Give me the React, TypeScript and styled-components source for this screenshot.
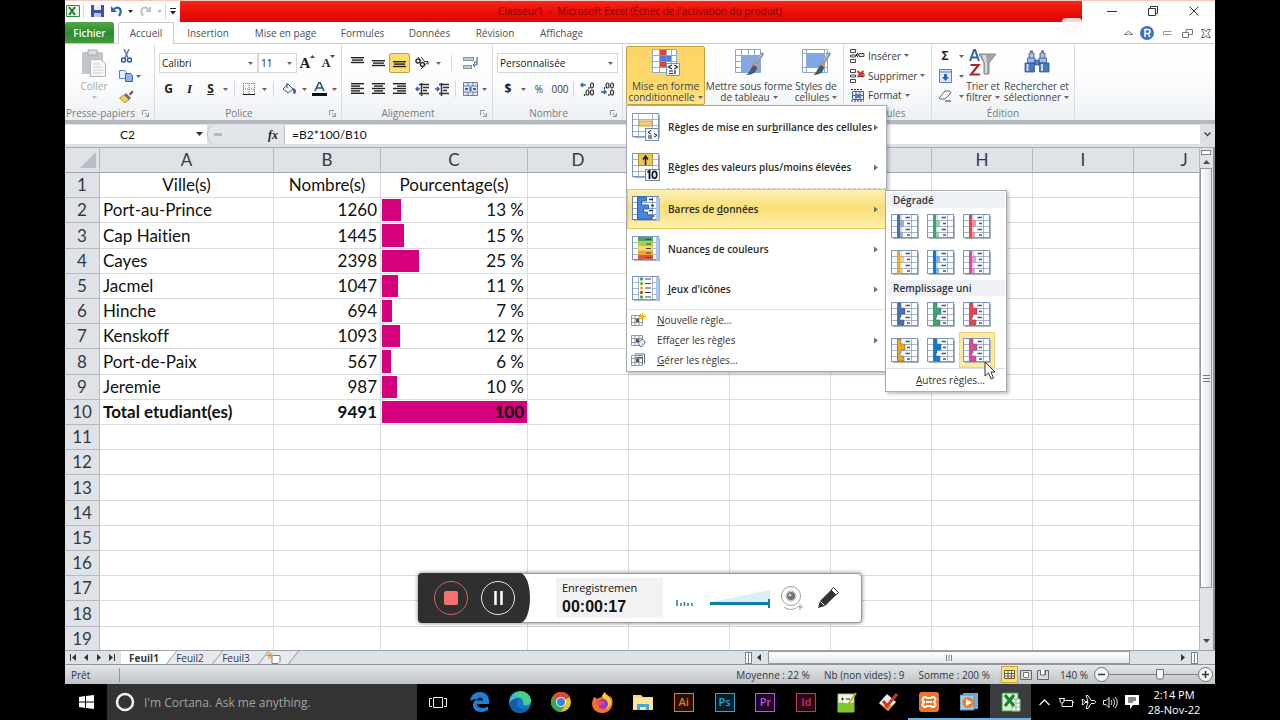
import React from "react";
import styled, { createGlobalStyle, css } from "styled-components";

const UI = `"Open Sans", "Noto Sans", sans-serif`;
const CELL = `Lato, "Liberation Sans", sans-serif`;

const Global = createGlobalStyle`
  * { box-sizing: border-box; }
  body { margin: 0; background: #000; font-family: ${UI}; font-size: 10px; color: #3b3b3b; }
  button, input, select { font: inherit; color: inherit; margin: 0; padding: 0; border: 0; background: none; border-radius: 0; }
  svg { display: block; flex: none; }
`;

/* ---------- shell ---------- */
const Desktop = styled.div`
  display: flex;
  flex-direction: column;
  min-height: 100vh;
  padding: 0 65px;
  background: #000;
`;
const Workbook = styled.main`
  display: flex;
  flex-direction: column;
  flex: 1;
  position: relative;
  background: #fff;
`;

/* ---------- title bar ---------- */
const TitleBar = styled.header`
  display: grid;
  grid-template-columns: 115px 1fr 133px;
  height: 22px;
  border-top: 1px solid #f6c9be;
  position: relative;
`;
const Watermark = styled.span`
  position: absolute;
  right: 133px;
  top: 17px;
  width: 20px;
  height: 18px;
  border-radius: 4px;
  background: rgba(255, 250, 250, 0.85);
`;
const QuickAccess = styled.div`
  display: flex;
  align-items: center;
  height: 20px;
`;
const Tool = styled.button<{ $w?: number; $on?: boolean }>`
  display: flex;
  align-items: center;
  justify-content: center;
  flex: none;
  width: ${(p) => p.$w ?? 21}px;
  height: 20px;
  ${(p) =>
    p.$on &&
    css`
      border: 1px solid #c9a13b;
      border-radius: 2px;
      background: linear-gradient(#fbdd7c, #fdd666 60%, #fde57c);
    `}
`;
const Title = styled.h1`
  margin: 0;
  height: 21px;
  padding-left: 18px;
  background: linear-gradient(#f5281c, #ee120b 40%, #df0402);
  color: #7d0806;
  font-size: 10px;
  line-height: 21px;
  font-weight: 400;
  text-align: center;
  white-space: pre;
`;
const WindowButtons = styled.div`
  display: flex;
  justify-content: flex-end;
  padding-right: 1px;
`;

/* ---------- tabs ---------- */
const Tabs = styled.nav`
  display: flex;
  align-items: flex-end;
  height: 22px;
  border-bottom: 1px solid #c5cad0;
  color: #4b4f54;
`;
const FileTab = styled.button`
  width: 49px;
  height: 21px;
  margin-right: 4px;
  border-radius: 2px 2px 0 0;
  background: linear-gradient(#52a647, #2c8a2c 55%, #3f9c38);
  color: #fff;
  font-size: 10px;
  font-weight: 600;
`;
const Tab = styled.button<{ $active?: boolean; $w: number }>`
  width: ${(p) => p.$w}px;
  height: 21px;
  white-space: nowrap;
  ${(p) =>
    p.$active &&
    css`
      height: 22px;
      margin-bottom: -1px;
      border: 1px solid #c5cad0;
      border-bottom-color: #fff;
      border-radius: 2px 2px 0 0;
      background: #fff;
    `}
`;
const TabTools = styled.div`
  display: flex;
  margin-left: auto;
`;

/* ---------- ribbon ---------- */
const RibbonBar = styled.section`
  display: flex;
  height: 80px;
  border-bottom: 4px solid #b3b9c0;
  background: linear-gradient(#fff, #fbfcfd 50%, #edf0f3);
`;
const Group = styled.div<{ $w: number }>`
  display: flex;
  flex-direction: column;
  flex: none;
  width: ${(p) => p.$w}px;
  border-right: 1px solid #d9dde1;
`;
const GroupBody = styled.div`
  display: flex;
  height: 61px;
  padding-top: 2px;
`;
const GroupLabel = styled.div<{ $launcher?: boolean }>`
  display: flex;
  align-items: center;
  justify-content: center;
  position: relative;
  height: 15px;
  padding-right: ${(p) => (p.$launcher ? 18 : 0)}px;
  color: #777b80;
  white-space: nowrap;
  svg { position: absolute; right: 5px; top: 5px; }
`;
const Stack = styled.div<{ $gap?: number; $top?: number }>`
  display: flex;
  flex-direction: column;
  gap: ${(p) => p.$gap ?? 0}px;
  padding-top: ${(p) => p.$top ?? 0}px;
`;
const Row = styled.div`
  display: flex;
  align-items: center;
  height: 20px;
`;
const Divider = styled.span<{ $m?: number }>`
  width: 1px;
  height: 16px;
  margin: 0 ${(p) => p.$m ?? 4}px;
  background: #d5d9dd;
`;
const Gap = styled.span<{ $w: number }>`
  flex: none;
  width: ${(p) => p.$w}px;
`;
const Combo = styled.label<{ $w: number }>`
  display: block;
  position: relative;
  width: ${(p) => p.$w}px;
  height: 20px;
  border: 1px solid #d3d6da;
  background: #fff;
  select {
    width: 100%;
    height: 18px;
    padding: 0 2px;
    appearance: none;
    color: #222;
  }
  svg { position: absolute; right: 4px; top: 8px; pointer-events: none; }
`;
const BigButton = styled.button<{ $w: number; $on?: boolean; $dim?: boolean }>`
  display: flex;
  flex-direction: column;
  align-items: center;
  flex: none;
  width: ${(p) => p.$w}px;
  height: 59px;
  padding: 3px 0 2px;
  line-height: 11px;
  white-space: nowrap;
  color: ${(p) => (p.$dim ? "#a5a8ab" : "#3f4246")};
  > svg { margin-bottom: auto; }
  ${(p) =>
    p.$on &&
    css`
      border: 1px solid #c8a23e;
      border-radius: 2px;
      background: linear-gradient(#fcd468, #fdd869 60%, #fee38a);
      padding: 2px 0 1px;
    `}
`;
const Line = styled.span`
  display: flex;
  align-items: center;
  gap: 3px;
  height: 11px;
`;
const TextTool = styled.button`
  display: flex;
  align-items: center;
  gap: 3px;
  height: 20px;
  padding-left: 6px;
  white-space: nowrap;
`;
const Anchor = styled.div`
  position: relative;
`;
const Glyph = styled.span<{ $serif?: boolean; $size?: number; $italic?: boolean; $line?: boolean }>`
  font-family: ${(p) => (p.$serif ? `"Liberation Serif", serif` : UI)};
  font-size: ${(p) => p.$size ?? 12}px;
  font-weight: 700;
  font-style: ${(p) => (p.$italic ? "italic" : "normal")};
  text-decoration: ${(p) => (p.$line ? "underline" : "none")};
  color: #222;
  line-height: 16px;
`;
const SizeTool = styled(Tool)`
  align-items: flex-start;
  padding-top: 2px;
`;

/* ---------- menus ---------- */
const Menu = styled.div`
  position: absolute;
  z-index: 5;
  top: 59px;
  left: 0;
  width: 261px;
  padding: 1px 0;
  border: 1px solid #a7abb0;
  background: #fff;
  box-shadow: 2px 2px 3px rgba(0, 0, 0, 0.25);
`;
const MenuItem = styled.button<{ $on?: boolean }>`
  display: flex;
  align-items: center;
  width: 100%;
  height: 40px;
  padding: 0 8px 0 5px;
  color: #2b2b2b;
  font-weight: 600;
  white-space: nowrap;
  span { flex: 1; margin-left: 8px; text-align: left; }
  ${(p) =>
    p.$on &&
    css`
      border: 1px solid #e8c95c;
      padding: 0 7px 0 4px;
      background: linear-gradient(#fdf0b4, #fbdf78 45%, #fae182 60%, #fdf3ac);
    `}
`;
const SmallItem = styled.button`
  display: flex;
  align-items: center;
  width: 100%;
  height: 20px;
  padding: 0 8px 0 4px;
  color: #333;
  white-space: nowrap;
  span { flex: 1; margin-left: 11px; text-align: left; }
`;
const MenuRule = styled.hr<{ $dashed?: boolean }>`
  height: 1px;
  margin: ${(p) => (p.$dashed ? "1px 0 0 40px" : "0")};
  border: 0;
  border-top: 1px ${(p) => (p.$dashed ? "dashed #c4c8cc" : "solid #dcdfe3")};
`;
const SubMenu = styled.div`
  position: absolute;
  z-index: 6;
  top: 84px;
  left: 258px;
  width: 122px;
  padding: 1px;
  border: 1px solid #a7abb0;
  background: #fff;
  box-shadow: 2px 2px 3px rgba(0, 0, 0, 0.25);
`;
const SubTitle = styled.h2`
  margin: 0;
  height: 16px;
  padding-left: 6px;
  background: #eef1f5;
  font-size: 10px;
  line-height: 16px;
  font-weight: 600;
  color: #2f343a;
`;
const Swatches = styled.div`
  display: grid;
  grid-template-columns: repeat(3, 36px);
  grid-auto-rows: 36px;
`;
const Swatch = styled.button<{ $on?: boolean }>`
  display: grid;
  place-items: center;
  border: 1px solid ${(p) => (p.$on ? "#efd67c" : "transparent")};
  background: ${(p) => (p.$on ? "#fbeaa0" : "none")};
`;
const MoreRules = styled.button`
  display: block;
  width: 100%;
  height: 22px;
  padding-left: 9px;
  border-top: 1px solid #dcdfe3;
  color: #333;
`;
const Pointer = styled.div`
  position: absolute;
  right: 10px;
  bottom: 11px;
`;

/* ---------- formula bar ---------- */
const FormulaBar = styled.div`
  display: grid;
  grid-template-columns: 142px 78px 1fr 15px;
  align-items: center;
  height: 24px;
  padding: 1px 0 3px;
  border-bottom: 1px solid #a9aeb4;
  background: #dde1e6;
  color: #111;
  > * { height: 19px; }
`;
const NameBox = styled.label`
  display: flex;
  align-items: center;
  background: #fff;
  input { width: 125px; text-align: center; font-family: ${CELL}; font-size: 12px; }
`;
const FxCell = styled.div`
  display: flex;
  align-items: center;
  justify-content: space-between;
  padding: 0 6px 0 4px;
  border: 1px solid #b9bec4;
  border-width: 0 1px 0 1px;
  border-radius: 9px 0 0 9px;
  background: #e3e6ea;
`;
const Formula = styled.input`
  && {
    min-width: 0;
    padding-left: 7px;
    background: #fff;
    font-family: ${CELL};
    font-size: 12px;
  }
`;

/* ---------- sheet ---------- */
const SheetRow = styled.div`
  display: flex;
  flex: 1 0 502px;
`;
const SheetView = styled.div`
  flex: 1;
  min-width: 0;
  height: 502px;
  overflow: hidden;
`;
const Sheet = styled.table`
  width: calc(100% + 36px);
  height: 504px;
  table-layout: fixed;
  border-collapse: separate;
  border-spacing: 0;
  font-family: ${CELL};
  font-size: 17px;
  font-variant-ligatures: none;
  line-height: 20px;
  color: #111;
  tr { height: 25px; }
  th, td { padding: 0 3px 0 3px; border-right: 1px solid #dadcdf; border-bottom: 1px solid #dadcdf; white-space: nowrap; }
  th { border-color: #b4b9bf; background: #dfe3e8; font-weight: 400; color: #333a42; }
  thead th { border-bottom-color: #9fa5ac; }
`;
const Corner = styled.span`
  display: block;
  width: 0;
  margin-left: auto;
  border-left: 16px solid transparent;
  border-bottom: 16px solid #b9bec5;
`;
const Cell = styled.td<{ $align?: string; $bold?: boolean }>`
  position: relative;
  text-align: ${(p) => p.$align ?? "left"};
  font-weight: ${(p) => (p.$bold ? 700 : 400)};
  span { position: relative; }
`;
const DataBar = styled.i`
  position: absolute;
  left: 1px;
  top: 1px;
  bottom: 1px;
  background: #d4007c;
`;
const VScroll = styled.div`
  display: flex;
  flex-direction: column;
  align-items: center;
  width: 16px;
  padding: 1px 2px 2px 1px;
  border-left: 1px solid #b4b9bf;
  border-right: 2px solid #8e9398;
  background: #dfe3e7;
`;
const VHandle = styled.span`
  width: 10px;
  height: 5px;
  margin: 1px 0 5px;
  border: 1px solid #7d838a;
  background: #fff;
`;
const VThumb = styled.div`
  display: grid;
  place-items: center;
  width: 12px;
  height: 420px;
  margin: 4px 0 auto;
  border: 1px solid #9299a1;
  background: linear-gradient(90deg, #fff, #dfe3e8);
`;

/* ---------- sheet tabs ---------- */
const BottomBar = styled.div`
  display: flex;
  height: 14px;
  border-top: 1px solid #9da3aa;
  background: #dde2e6;
`;
const NavButtons = styled.div`
  display: flex;
  width: 56px;
  padding-left: 1px;
  button { width: 13px; height: 13px; display: grid; place-items: center; }
`;
const SheetTab = styled.button<{ $active?: boolean; $w: number }>`
  position: relative;
  width: ${(p) => p.$w}px;
  height: 13px;
  line-height: 12px;
  font-weight: ${(p) => (p.$active ? 700 : 400)};
  color: #333a42;
  background: ${(p) => (p.$active ? "#fff" : "#e6eaed")};
  &::after {
    content: "";
    position: absolute;
    z-index: 1;
    top: 0;
    right: -5px;
    width: 8px;
    height: 13px;
    border-right: 1px solid #8e959c;
    background: inherit;
    transform: skewX(-38deg);
  }
  span { position: relative; z-index: 2; }
`;
const HScroll = styled.div`
  display: flex;
  align-items: center;
  gap: 2px;
  width: 470px;
  margin-left: auto;
  padding-right: 17px;
`;
const SplitHandle = styled.span`
  width: 7px;
  height: 12px;
  border: 1px solid #7d838a;
  background: linear-gradient(90deg, #fff 2px, #7d838a 2px, #7d838a 3px, #fff 3px);
`;
const HThumb = styled.div`
  display: grid;
  place-items: center;
  width: 362px;
  height: 13px;
  margin-right: auto;
  border: 1px solid #9299a1;
  background: linear-gradient(#fff, #e2e6ea);
`;

/* ---------- status bar ---------- */
const StatusBar = styled.footer`
  display: flex;
  align-items: center;
  height: 20px;
  padding: 0 2px 0 6px;
  border-top: 1px solid #8f959b;
  background: linear-gradient(#e4e7e9, #cdd1d4 60%, #bfc4c7);
  color: #34383c;
  white-space: nowrap;
`;
const Ready = styled.span`
  width: 49px;
  border-right: 1px solid #8f959b;
`;
const Stats = styled.div`
  display: flex;
  gap: 14px;
  margin-left: auto;
`;
const ViewButton = styled.button<{ $on?: boolean }>`
  display: grid;
  place-items: center;
  width: 17px;
  height: 17px;
  border: 1px solid ${(p) => (p.$on ? "#d2a52f" : "transparent")};
  background: ${(p) => (p.$on ? "#fbe07a" : "none")};
`;
const Round = styled.button`
  && {
    display: grid;
    place-items: center;
    width: 15px;
    height: 15px;
    border: 1px solid #6c7278;
    border-radius: 50%;
    background: #f3f5f6;
  }
`;
const Zoom = styled.input`
  && {
    width: 89px;
    height: 14px;
    appearance: none;
    background: linear-gradient(#7b8086, #7b8086) center / 100% 1px no-repeat;
  }
  &::-webkit-slider-thumb {
    appearance: none;
    width: 8px;
    height: 11px;
    border: 1px solid #6c7278;
    border-radius: 1px 1px 4px 4px;
    background: #f3f5f6;
  }
`;

/* ---------- recorder ---------- */
const Recorder = styled.aside`
  position: absolute;
  z-index: 7;
  left: 50%;
  bottom: 61px;
  display: flex;
  align-items: center;
  width: 444px;
  height: 50px;
  margin-left: -222px;
  border: 1px solid #9a9a9a;
  border-radius: 4px;
  background: #fff;
  box-shadow: 0 0 4px rgba(0, 0, 0, 0.5);
`;
const RecControls = styled.div`
  display: flex;
  align-items: center;
  gap: 13px;
  width: 112px;
  height: 50px;
  margin-left: -1px;
  padding-left: 16px;
  border-radius: 4px 10px 10px 4px / 4px 25px 25px 4px;
  background: #2f2f2f;
`;
const RecButton = styled.button<{ $c: string }>`
  && {
    display: grid;
    place-items: center;
    width: 34px;
    height: 34px;
    border: 1px solid ${(p) => p.$c};
    border-radius: 50%;
  }
`;
const RecTime = styled.div`
  width: 107px;
  height: 40px;
  margin-left: 26px;
  padding: 1px 6px 0;
  background: #f2f2f2;
  color: #111;
  font-size: 11px;
  line-height: 17px;
  strong { display: block; font: 700 16px/22px "Liberation Sans", sans-serif; }
`;
const Volume = styled.input`
  && {
    width: 60px;
    height: 16px;
    margin: 0 10px 0 17px;
    appearance: none;
    background: linear-gradient(#127ea3, #127ea3) 0 12px / 100% 3px no-repeat,
      linear-gradient(to bottom right, transparent 50%, #d9f0f8 50%) 0 0 / 100% 12px no-repeat;
  }
  &::-webkit-slider-thumb { appearance: none; width: 2px; height: 9px; margin-top: 10px; background: #127ea3; }
`;

/* ---------- taskbar ---------- */
const Taskbar = styled.footer`
  display: flex;
  height: 36px;
  background: #000;
  color: #fff;
`;
const Start = styled.button`
  display: grid;
  place-items: center;
  width: 42px;
`;
const Cortana = styled.label`
  display: flex;
  align-items: center;
  gap: 9px;
  width: 310px;
  padding-left: 8px;
  background: #333;
  input { flex: 1; min-width: 0; font-size: 12px; }
  input::placeholder { color: #a3a3a3; opacity: 1; }
`;
const Apps = styled.div`
  display: flex;
  flex: 1;
`;
const TaskApp = styled.button<{ $open?: boolean; $active?: boolean }>`
  display: grid;
  place-items: center;
  flex: 1;
  background: ${(p) => (p.$active ? "#3a3d3f" : "none")};
  box-shadow: ${(p) => (p.$open || p.$active ? "inset 0 -2px 0 #6fb0e6" : "none")};
`;
const AdobeMark = styled.span<{ $c: string; $bg: string }>`
  display: grid;
  place-items: center;
  width: 20px;
  height: 19px;
  border: 1px solid ${(p) => p.$c};
  background: ${(p) => p.$bg};
  color: ${(p) => p.$c};
  font: 600 11px/12px "Open Sans", sans-serif;
`;
const Tray = styled.div`
  display: flex;
  align-items: center;
  width: 184px;
  padding: 0 10px 0 2px;
`;
const TrayButton = styled.button`
  display: grid;
  place-items: center;
  width: 22px;
  height: 30px;
`;
const Clock = styled.time`
  flex: 1;
  text-align: center;
  font-size: 11px;
  line-height: 15px;
  white-space: nowrap;
`;

/* ---------- icons ---------- */
type SvgProps = { w: number; h: number; children: React.ReactNode };
const Svg = ({ w, h, children }: SvgProps) => (
  <svg width={w} height={h} viewBox={`0 0 ${w} ${h}`} fill="none" aria-hidden="true">
    {children}
  </svg>
);
const Caret = ({ c = "#666" }: { c?: string }) => (
  <Svg w={5} h={3}><path d="M0 0h5L2.500 3z" fill={c} /></Svg>
);
const UpCaret = () => (
  <Svg w={5} h={3}><path d="M0 3h5L2.500 0z" fill="#35507f" /></Svg>
);
const RightCaret = () => (
  <Svg w={4} h={7}><path d="M0 .5 4 3.500 0 6.500z" fill="#6c7075" /></Svg>
);
const Launcher = () => (
  <Svg w={7} h={7}><path d="M.5 5V.5H5M3 3l3 3M6.500 3v3.500H3" stroke="#8f959c" /></Svg>
);
const Lines = ({ rows, y = 0 }: { rows: [number, number][]; y?: number }) => (
  <Svg w={13} h={12}>
    {rows.map(([x, w], i) => (
      <rect key={i} x={x} y={y + i * 2.400} width={w} height={1.400} fill="#222" />
    ))}
  </Svg>
);
const Indent = ({ flip }: { flip?: boolean }) => (
  <Svg w={15} h={13}>
    <path d="M4 1.500h10M8 4.500h6M8 7.500h4M4 10.500h10M6.500 0v13" stroke="#333" strokeWidth="1.500" />
    <path d={flip ? "M0 6h4M2 4l2 2-2 2" : "M5 6H1M3 4 1 6l2 2"} stroke="#2f64b5" strokeWidth="1.500" />
  </Svg>
);
const Decimals = ({ up }: { up?: boolean }) => (
  <Svg w={15} h={14}>
    <path d={up ? "M6 3H1M3 1 1 3l2 2" : "M1 10h5M4 8l2 2-2 2"} stroke="#2f64b5" strokeWidth="1.500" />
    <g stroke="#333" strokeWidth="1.200">
      <ellipse cx="12" cy="3.500" rx="1.500" ry="2.500" />
      <ellipse cx="12" cy="10.500" rx="1.500" ry="2.500" />
      {up ? <ellipse cx="7.500" cy="10.500" rx="1.500" ry="2.500" /> : <ellipse cx="7.500" cy="3.500" rx="1.500" ry="2.500" />}
      <path d={up ? "M9 5v2M4.500 12v2" : "M4.500 5v2M9 12v2"} />
    </g>
  </Svg>
);

const GridBase = ({ line = "#7d97bd" }: { line?: string }) => (
  <>
    <path d="M2 24.500h25.500V2" stroke="#aab2bd" />
    <rect x=".5" y=".5" width="26" height="23" fill="#fdfeff" stroke={line} />
    <path d="M.5 6.500h26M.5 12.500h26M.5 18.500h26M6.500 0v24M20.500 0v24" stroke={line} strokeOpacity=".7" />
  </>
);
const BarsIcon = ({ c, solid }: { c: string; solid?: boolean }) => (
  <Svg w={28} h={25}>
    <GridBase />
    {solid ? (
      <path d="M6.500 1h3.500v5h4v6h-4v3h-1v3h4v5H6.500z" fill={c} stroke="#4b5a75" strokeOpacity=".5" />
    ) : (
      <>
        <path d="M6 1h3v23H6z" fill={c} />
        <path d="M9 6.500h4v6H9zM9 18.500h3v5H9z" fill={c} fillOpacity=".55" />
        <path d="M9 1h2v5H9zM9 13h2v5H9z" fill={c} fillOpacity=".25" />
      </>
    )}
    <path d="M14.500 3.500h4.500M16 9.500h3M14.500 15.500h4.500M16 21h3" stroke="#555" strokeWidth="1.500" />
  </Svg>
);
const HighlightIcon = () => (
  <Svg w={28} h={28}>
    <GridBase />
    <rect x="7" y="8" width="13" height="5" fill="#f4cf6c" stroke="#c9a245" />
    <rect x="13.500" y="15.500" width="13" height="12" fill="#f1f5fb" stroke="#7189ab" />
    <path d="m19 17.500-3 1.800 3 1.800M16 23h4M16 25h4M22 20.500l3 1.800-3 1.800" stroke="#222" />
  </Svg>
);
const TopIcon = () => (
  <Svg w={28} h={28}>
    <GridBase />
    <path d="M6.500 .5h14v12h-14z" fill="#e9c659" stroke="#b78d2c" />
    <path d="M13.500 12V4M11 6.500 13.500 3 16 6.500" stroke="#222" strokeWidth="1.500" />
    <rect x="13.500" y="16.500" width="14" height="11" fill="#f0f4fa" stroke="#7189ab" />
    <path d="m15.500 19 2-1v8" stroke="#111" strokeWidth="1.800" />
    <ellipse cx="22.500" cy="21.800" rx="2.200" ry="3.500" stroke="#111" strokeWidth="1.600" />
  </Svg>
);
const MenuBarsIcon = () => (
  <Svg w={28} h={26}>
    <GridBase line="#5f82b8" />
    <path d="M5.500 1h9v4h-5v4h7v4h-5v3h4v3h4v4h-14z" fill="#4b83dd" stroke="#2e5fb0" />
    <path d="M17 3.500h4M19 9.500h3M17 14.500h4M20.500 20h2" stroke="#333" strokeWidth="1.500" />
    <path d="M24 1h3v23h-3z" fill="#a9c6f0" />
  </Svg>
);
const ScaleIcon = () => (
  <Svg w={28} h={26}>
    <GridBase />
    {["#4fa05a", "#a5cf62", "#f3dd5b", "#f2a13d", "#e0533c"].map((c, i) => (
      <rect key={c} x="6" y={1 + i * 4.500} width="15" height="4.500" fill={c} />
    ))}
    <path d="M14 3.500h5M14 8h5M14 12.500h5M14 17h5M14 21.500h5" stroke="#444" />
    <path d="M24 1h3v23h-3z" fill="#a9c6f0" />
  </Svg>
);
const IconSetIcon = () => (
  <Svg w={28} h={26}>
    <GridBase />
    <rect x="7" y="1" width="13" height="22" fill="#fff" />
    {["#46a24b", "#7db93b", "#e8b923", "#d2442f", "#46a24b"].map((c, i) => (
      <g key={i}>
        <circle cx="9.500" cy={3 + i * 4.500} r="1.700" fill={c} />
        <path d={`M13 ${3 + i * 4.500}h6`} stroke="#444" />
      </g>
    ))}
    <path d="M24 1h3v23h-3z" fill="#a9c6f0" />
  </Svg>
);
const MiniGrid = ({ kind }: { kind: "new" | "clear" | "manage" }) => (
  <Svg w={15} h={14}>
    <path d="M.5 2.500h11v10H.5zM.5 5.500h11M.5 9.500h11M4 2.500v10M8 2.500v10" fill="#fff" stroke="#8f99a6" />
    <rect x="5" y="6" width="3" height="3" fill="#555" />
    {kind === "new" && <path d="M11.500 0v7M8 3.500h7M9 1l5 5M14 1 9 6" stroke="#e9b92c" />}
    {kind === "clear" && <path d="m7 10 4-4 3.500 3-3.500 4.500H9z" fill="#dfe9f7" stroke="#5a78a8" />}
    {kind === "manage" && <path d="M3.500 1h10v10M4.500 4.500h7v7" stroke="#5f6c7e" />}
  </Svg>
);
const CondIcon = () => (
  <Svg w={28} h={27}>
    <path d="M.5 .5h24v23H.5z" fill="#fff" stroke="#8fa5c5" />
    <path d="M8 1h6v6H8zM8 13h6v5H8z" fill="#e0433c" />
    <path d="M8 7h11v6H8z" fill="#4c7ddd" />
    <path d="M.5 6.500h24M.5 12.500h24M.5 18.500h24M7.500 0v24M14.500 0v24M19.500 0v24" stroke="#7f9ac2" strokeOpacity=".8" />
    <path d="M14.500 14.500h13v12h-13z" fill="#f5f7fa" stroke="#7f8ea5" />
    <path d="m20 16-3.500 2L20 20M17 22h4M17 24.500h4M22.500 16l3 2-3 2M23 21v4" stroke="#222" strokeWidth="1.200" />
  </Svg>
);
const TableIcon = ({ styles }: { styles?: boolean }) => (
  <Svg w={29} h={27}>
    <path d="M.5 .5h25v23H.5z" fill="#fff" stroke="#8fa5c5" />
    <path d={styles ? "M5 5h17v13H5z" : "M7 7h18v17H7z"} fill="#7ea6ea" />
    <path
      d={styles ? "M.5 4.500h25M.5 18.500h25M4.500 0v24M22.500 0v24" : "M.5 6.500h25M.5 12.500h25M.5 18.500h25M6.500 0v24M13.500 0v24M19.500 0v24"}
      stroke="#8fa9d0"
    />
    <path d="m27 5-8 12" stroke="#8d97a4" strokeWidth="3.500" strokeLinecap="round" />
    <path d="m26.500 5-5 7" stroke="#c9d0d8" strokeWidth="1" strokeLinecap="round" />
    <path d="m19 16 3 2c0 5-4 8-11 8 4-2 4-7 8-10z" fill="#4d5865" />
    <path d="m19 14.500 3.500 2.500" stroke="#d79a4d" strokeWidth="2.200" />
  </Svg>
);
const CellsIcon = ({ kind }: { kind: "insert" | "delete" | "format" }) => (
  <Svg w={15} h={14}>
    {kind === "format" ? (
      <>
        <path d="M2.500 3.500h11v8h-11zM2.500 7.500h11M6 3.500v8M10 3.500v8" fill="#e4edf9" stroke="#44628f" />
        <path d="M5 6h6v4H5z" fill="#4e7fd0" />
        <path d="M1 1.500h12M1 13h13" stroke="#333" strokeDasharray="2 1" />
      </>
    ) : (
      <>
        <path d="M.5 .5h5v3h-5zM.5 6h5v2h-5zM.5 10.500h5v3h-5z" fill="#fff" stroke="#444" />
        <path d="M9 4.500h5v3H9z" fill="#dce8f8" stroke="#444" />
        {kind === "insert" ? <path d="M9 6H6m2-2L6 6l2 2" stroke="#222" /> : <path d="m7.500 2 6 6m0-6-6 6" stroke="#d8312b" strokeWidth="2" />}
      </>
    )}
  </Svg>
);
const PasteIcon = () => (
  <Svg w={26} h={29}>
    <rect x="1" y="3" width="21" height="22" rx="1" fill="#c3c6c9" />
    <path d="M7 1h9v5H7z" fill="#dcdee0" stroke="#a4a7aa" />
    <path d="M9.500 10.500h10l5 4v13h-15z" fill="#f6f7f8" stroke="#b3b6b9" />
    <path d="M12 15h7M12 18h10M12 21h10M12 24h10" stroke="#cfd2d5" />
  </Svg>
);
const SortIcon = () => (
  <Svg w={28} h={28}>
    <path d="M10 5h17l-7 9v11h-5V14z" fill="#a3a6aa" stroke="#85898e" />
    <path d="M13 6h4l1 9v9h-2V14z" fill="#d9dbdd" />
    <path d="m1 12 4-11h1l4 11M3 8.500h5.500" stroke="#3562ac" strokeWidth="2" />
    <path d="M1.500 16h8L2 25.500h9" stroke="#a8282a" strokeWidth="2.200" />
  </Svg>
);
const BinocularsIcon = () => (
  <Svg w={26} h={27}>
    <g stroke="#27487e" strokeOpacity=".7">
      <path d="M5 4h5v6H5zM16 4h5v6h-5z" fill="#a9c3ea" />
      <path d="M3.500 9h7.500v5H3.500zM15 9h7.500v5H15z" fill="#9cbbe8" />
      <path d="M1 14h9.500v9H1zM15.500 14H25v9h-9.500z" fill="#4a77bd" />
      <path d="M11 11h4v5h-4z" fill="#5c85c4" />
    </g>
    <path d="M3.500 15v7M18 15v7" stroke="#c9dbf5" strokeWidth="2" />
    <path d="M6 2.500h3M17 2.500h3" stroke="#666" strokeWidth="2" />
  </Svg>
);
const ExcelMini = () => (
  <Svg w={14} h={14}>
    <path d="M.5 1.500h13v11H.5z" fill="#e8f4e5" stroke="#2f8f3b" />
    <path d="m3 3 6 8M9 3l-6 8" stroke="#1e7a2e" strokeWidth="2" />
  </Svg>
);

/* ---------- data ---------- */
const cols = ["A", "B", "C", "D", "E", "F", "G", "H", "I", "J"];
const widths = [174, 107, 147, 101, 101, 101, 101, 101, 101];
const rows: [string, string, string, number][] = [
  ["Ville(s)", "Nombre(s)", "Pourcentage(s)", 0],
  ["Port-au-Prince", "1260", "13 %", 13],
  ["Cap Haitien", "1445", "15 %", 15],
  ["Cayes", "2398", "25 %", 25],
  ["Jacmel", "1047", "11 %", 11],
  ["Hinche", "694", "7 %", 7],
  ["Kenskoff", "1093", "12 %", 12],
  ["Port-de-Paix", "567", "6 %", 6],
  ["Jeremie", "987", "10 %", 10],
  ["Total etudiant(es)", "9491", "100", 99],
];
const tones = ["#4a6db0", "#3fa569", "#e8444a", "#eea71c", "#0f7bd0", "#dc4a9a"];
const toneNames = ["bleue", "verte", "rouge", "orange", "bleu clair", "violette"];

const SelectBox = ({ w, value, label }: { w: number; value: string; label: string }) => (
  <Combo $w={w}>
    <select aria-label={label} defaultValue={value}><option>{value}</option></select>
    <Caret />
  </Combo>
);

const ConditionalMenu = () => (
  <Menu>
    <MenuItem><HighlightIcon /><span>Règles de mise en sur<u>b</u>rillance des cellules</span><RightCaret /></MenuItem>
    <MenuItem><TopIcon /><span><u>R</u>ègles des valeurs plus/moins élevées</span><RightCaret /></MenuItem>
    <MenuRule $dashed />
    <MenuItem $on><MenuBarsIcon /><span>Barres de <u>d</u>onnées</span><RightCaret /></MenuItem>
    <MenuItem><ScaleIcon /><span>Nuance<u>s</u> de couleurs</span><RightCaret /></MenuItem>
    <MenuItem><IconSetIcon /><span><u>J</u>eux d'icônes</span><RightCaret /></MenuItem>
    <MenuRule />
    <SmallItem><MiniGrid kind="new" /><span><u>N</u>ouvelle règle...</span></SmallItem>
    <SmallItem><MiniGrid kind="clear" /><span>Effa<u>c</u>er les règles</span><RightCaret /></SmallItem>
    <SmallItem><MiniGrid kind="manage" /><span><u>G</u>érer les règles...</span></SmallItem>
    <SubMenu>
      <SubTitle>Dégradé</SubTitle>
      <Swatches>
        {tones.map((c, i) => <Swatch key={c} aria-label={`Dégradé ${toneNames[i]}`}><BarsIcon c={c} /></Swatch>)}
      </Swatches>
      <SubTitle>Remplissage uni</SubTitle>
      <Swatches>
        {tones.map((c, i) => <Swatch key={c} $on={i === 5} aria-label={`Uni ${toneNames[i]}`}><BarsIcon c={c} solid /></Swatch>)}
      </Swatches>
      <MoreRules><u>A</u>utres règles...</MoreRules>
      <Pointer>
        <Svg w={12} h={19}>
          <path d="M1 1v14l3.500-3 2.500 6 2.500-1L7 11h4z" fill="#fff" stroke="#333" />
        </Svg>
      </Pointer>
    </SubMenu>
  </Menu>
);

const Ribbon = () => (
  <RibbonBar>
    <Group $w={90}>
      <GroupBody>
        <Gap $w={3} />
        <BigButton $w={52} $dim><PasteIcon />Coller<Line><Caret c="#bbb" /></Line></BigButton>
        <Stack>
          <Row><Tool $w={12} aria-label="Couper"><Svg w={11} h={14}><path d="m3 0 4 9M8 0 4 9" stroke="#667a99" strokeWidth="1.500" /><circle cx="2.500" cy="11" r="2" stroke="#2c57a0" strokeWidth="1.500" /><circle cx="8.500" cy="11" r="2" stroke="#2c57a0" strokeWidth="1.500" /></Svg></Tool></Row>
          <Row>
            <Tool $w={12} aria-label="Copier"><Svg w={14} h={12}><path d="M.5 .5h5l2 2v6h-7z" fill="#e4eefb" stroke="#5b7fb8" /><path d="M6.500 3.500h5l2 2v6h-7z" fill="#8fb4ea" stroke="#3964a8" /></Svg></Tool>
            <Tool $w={12} aria-label="Options de copie"><Caret /></Tool>
          </Row>
          <Row><Tool $w={12} aria-label="Reproduire la mise en forme"><Svg w={15} h={13}><path d="m10 4 3-3.500 1.500 1.500-3 3.500z" fill="#555" /><path d="m7 3 5 5-2 2-5-5z" fill="#6b7178" /><path d="M5 5 .5 8l5 4.500L10 10z" fill="#f0d25a" stroke="#b99622" /></Svg></Tool></Row>
        </Stack>
      </GroupBody>
      <GroupLabel $launcher>Presse-papiers<Launcher /></GroupLabel>
    </Group>

    <Group $w={187}>
      <GroupBody>
        <Stack $gap={6} $top={7}>
          <Row>
            <Gap $w={4} />
            <SelectBox w={99} value="Calibri" label="Police" />
            <SelectBox w={39} value="11" label="Taille" />
            <SizeTool aria-label="Agrandir la police"><Glyph $serif $size={15}>A</Glyph><UpCaret /></SizeTool>
            <SizeTool aria-label="Réduire la police"><Glyph $serif $size={12}>A</Glyph><Caret c="#35507f" /></SizeTool>
          </Row>
          <Row>
            <Gap $w={3} />
            <Tool><Glyph>G</Glyph></Tool>
            <Tool><Glyph $serif $italic $size={13}>I</Glyph></Tool>
            <Tool><Glyph $line>S</Glyph></Tool>
            <Tool $w={9} aria-label="Soulignement"><Caret /></Tool>
            <Divider />
            <Tool $w={20} aria-label="Bordures"><Svg w={12} h={12}><path d="M.5 0v11M6 0v11M11.500 0v11M0 .5h12M0 6h12" stroke="#777" strokeDasharray="1 1" /><path d="M0 11.500h12" stroke="#222" /></Svg></Tool>
            <Tool $w={11} aria-label="Options de bordure"><Caret /></Tool>
            <Divider $m={3} />
            <Tool $w={23} aria-label="Remplissage"><Svg w={14} h={13}><path d="m6 1 5 5-5 4-5-4z" fill="#e9eff8" stroke="#46587a" /><path d="M5 0v5" stroke="#46587a" /><path d="M11 5c3 1 4 3 2 6-2 0-2-2-2-6z" fill="#2f64b5" /></Svg></Tool>
            <Tool $w={9} aria-label="Couleur de remplissage"><Caret /></Tool>
            <Tool $w={21} aria-label="Couleur de police"><Svg w={15} h={14}><path d="m3 9 4-8.500h1L12 9M4.500 6h6" stroke="#35507f" strokeWidth="1.600" /><path d="M0 11h15v3H0z" fill="#111" /></Svg></Tool>
            <Tool $w={9} aria-label="Couleurs"><Caret c="#b0413e" /></Tool>
          </Row>
        </Stack>
      </GroupBody>
      <GroupLabel $launcher>Police<Launcher /></GroupLabel>
    </Group>

    <Group $w={151}>
      <GroupBody>
        <Stack $gap={6} $top={7}>
          <Row>
            <Gap $w={5} />
            <Tool aria-label="Aligner en haut"><Lines rows={[[0, 13], [1, 11], [0, 13]]} /></Tool>
            <Tool aria-label="Aligner au centre"><Lines y={3} rows={[[0, 13], [1, 11], [0, 13]]} /></Tool>
            <Tool $on aria-label="Aligner en bas"><Lines y={4} rows={[[0, 13], [1, 11], [0, 13]]} /></Tool>
            <Tool $w={24} aria-label="Orientation"><Svg w={14} h={14}><circle cx="3" cy="5" r="2" stroke="#333" strokeWidth="1.500" /><circle cx="7.500" cy="8.500" r="2" stroke="#333" strokeWidth="1.500" /><path d="m3 1 3 4M6 1l4 5M6 13l7-7M10 5.500h3v3" stroke="#333" /></Svg></Tool>
            <Tool $w={9} aria-label="Options d'orientation"><Caret /></Tool>
            <Divider $m={8} />
            <Tool aria-label="Renvoyer à la ligne"><Svg w={15} h={14}><path d="M0 1h11v4H0zM0 9h9v4H0z" fill="#8e949c" /><path d="M1 3h9M1 11h7" stroke="#fff" /><path d="M11 6h3v3h-3m1-2-2 2 2 2" stroke="#2f64b5" /><path d="M14 1v5" stroke="#444" /></Svg></Tool>
          </Row>
          <Row>
            <Gap $w={5} />
            <Tool aria-label="Aligner à gauche"><Lines rows={[[0, 13], [0, 9], [0, 13], [0, 9], [0, 13]]} /></Tool>
            <Tool aria-label="Centrer"><Lines rows={[[0, 13], [2, 9], [0, 13], [2, 9], [0, 13]]} /></Tool>
            <Tool aria-label="Aligner à droite"><Lines rows={[[0, 13], [4, 9], [0, 13], [4, 9], [0, 13]]} /></Tool>
            <Tool $w={24} aria-label="Diminuer le retrait"><Indent /></Tool>
            <Tool $w={17} aria-label="Augmenter le retrait"><Indent flip /></Tool>
            <Divider $m={4} />
            <Tool $w={20} aria-label="Fusionner"><Svg w={15} h={14}><path d="M.5 .5h14v13H.5zM.5 4h14M.5 10h14M5 .5V4M10 .5V4M5 10v4M10 10v4" fill="#dfe9f7" stroke="#6d7f9a" /><path d="M2 7h3M13 7h-3M7.500 5v4" stroke="#2f64b5" strokeWidth="2" /></Svg></Tool>
            <Tool $w={9} aria-label="Options de fusion"><Caret /></Tool>
          </Row>
        </Stack>
      </GroupBody>
      <GroupLabel $launcher>Alignement<Launcher /></GroupLabel>
    </Group>

    <Group $w={130}>
      <GroupBody>
        <Stack $gap={6} $top={7}>
          <Row><Gap $w={4} /><SelectBox w={121} value="Personnalisée" label="Format de nombre" /></Row>
          <Row>
            <Gap $w={4} />
            <Tool $w={22}><Glyph>$</Glyph></Tool>
            <Tool $w={9} aria-label="Formats comptables"><Caret /></Tool>
            <Tool $w={22}>%</Tool>
            <Tool $w={20}>000</Tool>
            <Divider $m={3} />
            <Tool $w={20} aria-label="Ajouter une décimale"><Decimals up /></Tool>
            <Tool $w={20} aria-label="Réduire les décimales"><Decimals /></Tool>
          </Row>
        </Stack>
      </GroupBody>
      <GroupLabel $launcher>Nombre<Launcher /></GroupLabel>
    </Group>

    <Group $w={221}>
      <GroupBody>
        <Gap $w={3} />
        <Anchor>
          <BigButton $w={79} $on aria-expanded="true">
            <CondIcon />Mise en forme<Line>conditionnelle<Caret /></Line>
          </BigButton>
          <ConditionalMenu />
        </Anchor>
        <BigButton $w={88}><TableIcon />Mettre sous forme<Line>de tableau<Caret /></Line></BigButton>
        <BigButton $w={46}><TableIcon styles />Styles de<Line>cellules<Caret /></Line></BigButton>
      </GroupBody>
      <GroupLabel>Style</GroupLabel>
    </Group>

    <Group $w={88}>
      <GroupBody>
        <Stack>
          <TextTool><CellsIcon kind="insert" />Insérer<Caret /></TextTool>
          <TextTool><CellsIcon kind="delete" />Supprimer<Caret /></TextTool>
          <TextTool><CellsIcon kind="format" />Format<Caret /></TextTool>
        </Stack>
      </GroupBody>
      <GroupLabel>Cellules</GroupLabel>
    </Group>

    <Group $w={143}>
      <GroupBody>
        <Stack>
          <Row><Tool $w={26}><Glyph>Σ</Glyph></Tool><Tool $w={6} aria-label="Fonctions"><Caret /></Tool></Row>
          <Row><Tool $w={26} aria-label="Remplissage"><Svg w={13} h={14}><path d="M.5 .5h12v13H.5z" fill="#dce8f8" stroke="#5b7fb8" /><path d="M.5 3h12" stroke="#5b7fb8" /><path d="M5 5h3v3h2l-3.500 4L3 8h2z" fill="#2f64b5" /></Svg></Tool><Tool $w={6} aria-label="Options de remplissage"><Caret /></Tool></Row>
          <Row><Tool $w={26} aria-label="Effacer"><Svg w={14} h={12}><path d="m1 8 6-7h5l1 2-6 6H2z" fill="#f2f5f9" stroke="#5d6c82" /><path d="M7 11h6" stroke="#333" /></Svg></Tool><Tool $w={6} aria-label="Options d'effacement"><Caret /></Tool></Row>
        </Stack>
        <BigButton $w={38}><SortIcon />Trier et<Line>filtrer<Caret /></Line></BigButton>
        <BigButton $w={69}><BinocularsIcon />Rechercher et<Line>sélectionner<Caret /></Line></BigButton>
      </GroupBody>
      <GroupLabel>Édition</GroupLabel>
    </Group>
  </RibbonBar>
);

const App = () => (
  <Desktop>
    <Global />
    <Workbook>
      <TitleBar>
        <QuickAccess>
          <Tool $w={15} aria-label="Excel"><ExcelMini /></Tool>
          <Divider $m={3} />
          <Tool $w={20} aria-label="Enregistrer"><Svg w={13} h={12}><path d="M0 0h13v12H0z" fill="#3c50ae" /><path d="M3 0h7v5H3z" fill="#e8ecfb" /><path d="M3 8h7v4H3z" fill="#b8c2ea" /></Svg></Tool>
          <Tool $w={20} aria-label="Annuler"><Svg w={12} h={12}><path d="M3 4c5-4 9 1 5 7" stroke="#2f64b5" strokeWidth="2.200" /><path d="M0 1v6h6z" fill="#2f64b5" /></Svg></Tool>
          <Tool $w={7} aria-label="Historique"><Caret c="#222" /></Tool>
          <Tool $w={22} aria-label="Rétablir"><Svg w={12} h={12}><path d="M9 4C4 0 0 5 4 11" stroke="#bcc0c4" strokeWidth="2" /><path d="M12 1v6H6z" fill="#bcc0c4" /></Svg></Tool>
          <Tool $w={7} aria-label="Rétablir plus"><Caret c="#bbb" /></Tool>
          <Divider $m={2} />
          <Tool $w={9} aria-label="Personnaliser"><Svg w={6} h={7}><path d="M0 .5h6" stroke="#222" /><path d="M0 3h6L3 6.500z" fill="#222" /></Svg></Tool>
        </QuickAccess>
        <Title>{"Classeur1  -  Microsoft Excel (Échec de l'activation du produit)"}</Title>
        <WindowButtons>
          <Tool $w={41} aria-label="Réduire"><Svg w={10} h={10}><path d="M0 5.500h10" stroke="#333" /></Svg></Tool>
          <Tool $w={41} aria-label="Restaurer"><Svg w={10} h={10}><path d="M.5 2.500h7v7h-7zM2.500 2.500v-2h7v7h-2" stroke="#333" /></Svg></Tool>
          <Tool $w={41} aria-label="Fermer"><Svg w={10} h={10}><path d="m.5 .5 9 9m0-9-9 9" stroke="#333" /></Svg></Tool>
        </WindowButtons>
        <Watermark />
      </TitleBar>

      <Tabs>
        <FileTab>Fichier</FileTab>
        <Tab $active $w={56}>Accueil</Tab>
        <Tab $w={68}>Insertion</Tab>
        <Tab $w={87}>Mise en page</Tab>
        <Tab $w={67}>Formules</Tab>
        <Tab $w={67}>Données</Tab>
        <Tab $w={64}>Révision</Tab>
        <Tab $w={69}>Affichage</Tab>
        <TabTools>
          <Tool $w={18} aria-label="Réduire le ruban"><Svg w={9} h={6}><path d="M.5 4.500 4.500 1l4 3.500h-3L4.500 3.500l-1 1z" stroke="#777" /></Svg></Tool>
          <Tool $w={20} aria-label="Aide"><Svg w={14} h={14}><circle cx="7" cy="7" r="7" fill="#3d72bf" /><path d="M5 11V3.500h3a2 2 0 0 1 0 4H5M8 7.500l2 3.500" stroke="#fff" strokeWidth="1.500" /></Svg></Tool>
          <Tool $w={20} aria-label="Réduire le classeur"><Svg w={9} h={4}><path d="M8.500 .5h-8v3h8" stroke="#999" /></Svg></Tool>
          <Tool $w={20} aria-label="Restaurer le classeur"><Svg w={11} h={9}><path d="M.5 3.500h6v5h-6zM4 3V.5h6.500v5H7" stroke="#777" /></Svg></Tool>
          <Tool $w={18} aria-label="Fermer le classeur"><Svg w={10} h={9}><path d="M.5 .5h3L5 2.500 6.500.5h3L7 4.500l2.500 4h-3L5 6.500l-1.500 2h-3l2.500-4z" stroke="#666" /></Svg></Tool>
        </TabTools>
      </Tabs>

      <Ribbon />

      <FormulaBar>
        <NameBox><input aria-label="Zone Nom" defaultValue="C2" /><Svg w={14} h={5}><path d="M6 0h7L9.500 4z" fill="#333" /></Svg></NameBox>
        <FxCell>
          <Svg w={12} h={6}><rect x="2" y="1" width="8" height="3" rx="1" fill="#b4b9bf" /></Svg>
          <Glyph $serif $italic>fx</Glyph>
        </FxCell>
        <Formula aria-label="Formule" defaultValue="=B2*100/B10" />
        <Tool $w={15} aria-label="Développer"><Svg w={7} h={5}><path d="m.5 .5 3 3 3-3" stroke="#444" strokeWidth="1.500" /></Svg></Tool>
      </FormulaBar>

      <SheetRow>
        <SheetView>
          <Sheet>
            <colgroup>
              <col width={35} />
              {widths.map((w, i) => <col key={i} width={w} />)}
              <col />
            </colgroup>
            <thead>
              <tr>
                <th aria-label="Tout sélectionner"><Corner /></th>
                {cols.map((c) => <th key={c} scope="col">{c}</th>)}
              </tr>
            </thead>
            <tbody>
              {Array.from({ length: 19 }, (_, r) => {
                const data = rows[r];
                const bold = r === 9;
                return (
                  <tr key={r}>
                    <th scope="row">{r + 1}</th>
                    <Cell $align={r === 0 ? "center" : "left"} $bold={bold}>{data?.[0]}</Cell>
                    <Cell $align={r === 0 ? "center" : "right"} $bold={bold}>{data?.[1]}</Cell>
                    <Cell $align={r === 0 ? "center" : "right"} $bold={bold}>
                      {data && data[3] > 0 && <DataBar style={{ width: `${data[3]}%` }} />}
                      {data && <span>{data[2]}</span>}
                    </Cell>
                    {cols.slice(3).map((c) => <Cell key={c} />)}
                  </tr>
                );
              })}
            </tbody>
          </Sheet>
        </SheetView>
        <VScroll>
          <VHandle />
          <Svg w={7} h={4}><path d="M0 4h7L3.500 0z" fill="#444b54" /></Svg>
          <VThumb><Svg w={7} h={7}><path d="M0 .5h7M0 3.500h7M0 6.500h7" stroke="#6f757c" /></Svg></VThumb>
          <Svg w={7} h={9}><path d="M0 0h7L3.500 4z" fill="#444b54" /></Svg>
        </VScroll>
      </SheetRow>

      <BottomBar>
        <NavButtons>
          <button aria-label="Première feuille"><Svg w={6} h={7}><path d="M.5 0v7" stroke="#333" /><path d="M6 0v7L2 3.500z" fill="#333" /></Svg></button>
          <button aria-label="Feuille précédente"><Svg w={4} h={7}><path d="M4 0v7L0 3.500z" fill="#333" /></Svg></button>
          <button aria-label="Feuille suivante"><Svg w={4} h={7}><path d="M0 0v7l4-3.500z" fill="#333" /></Svg></button>
          <button aria-label="Dernière feuille"><Svg w={6} h={7}><path d="M5.500 0v7" stroke="#333" /><path d="M0 0v7l4-3.500z" fill="#333" /></Svg></button>
        </NavButtons>
        <SheetTab $active $w={46}><span>Feuil1</span></SheetTab>
        <SheetTab $w={46}><span>Feuil2</span></SheetTab>
        <SheetTab $w={46}><span>Feuil3</span></SheetTab>
        <SheetTab $w={30} aria-label="Insérer une feuille"><span><Svg w={30} h={12}><path d="M13 3.500h8v6l-2 2h-6z" fill="#fff" stroke="#6a7fb0" /><path d="M11 0v7M7.500 3.500h7M8.500 1l5 5M13.500 1l-5 5" stroke="#e2952c" /></Svg></span></SheetTab>
        <HScroll>
          <SplitHandle />
          <Svg w={12} h={7}><path d="M7 0v7L3 3.500z" fill="#333" /></Svg>
          <HThumb><Svg w={7} h={6}><path d="M.5 0v6M3 0v6M5.500 0v6" stroke="#7d838a" /></Svg></HThumb>
          <Svg w={8} h={7}><path d="M0 0v7l4-3.500z" fill="#333" /></Svg>
          <SplitHandle />
        </HScroll>
      </BottomBar>

      <StatusBar>
        <Ready>Prêt</Ready>
        <Stats><span>Moyenne : 22 %</span><span>Nb (non vides) : 9</span><span>Somme : 200 %</span></Stats>
        <Divider $m={5} />
        <ViewButton $on aria-label="Normal"><Svg w={11} h={9}><path d="M.5 .5h10v8H.5zM0 3.500h11M0 6h11M4 0v9M7.500 0v9" fill="#fff" stroke="#6a5a2a" /></Svg></ViewButton>
        <ViewButton aria-label="Mise en page"><Svg w={12} h={10}><path d="M.5 .5h11v9H.5z" fill="#d5d9dc" stroke="#666" /><path d="M3.500 2.500h5v5h-5z" fill="#fff" stroke="#777" /></Svg></ViewButton>
        <ViewButton aria-label="Sauts de page"><Svg w={12} h={10}><path d="M.5 .5h11v9H.5z" fill="#d5d9dc" stroke="#666" /><path d="M3.500 0v5h5V0M8 5V0" fill="#fff" stroke="#666" /></Svg></ViewButton>
        <Gap $w={8} />
        <span>140 %</span>
        <Gap $w={6} />
        <Round aria-label="Zoom arrière"><Svg w={7} h={7}><path d="M0 3.500h7" stroke="#333" strokeWidth="1.500" /></Svg></Round>
        <Zoom type="range" aria-label="Zoom" min={0} max={100} defaultValue={58} />
        <Round aria-label="Zoom avant"><Svg w={7} h={7}><path d="M0 3.500h7M3.500 0v7" stroke="#333" strokeWidth="1.500" /></Svg></Round>
      </StatusBar>

      <Recorder>
        <RecControls>
          <RecButton $c="#d9635f" aria-label="Arrêter"><Svg w={14} h={14}><rect width="14" height="14" rx="2" fill="#f4716f" /></Svg></RecButton>
          <RecButton $c="#e5e5e5" aria-label="Pause"><Svg w={9} h={14}><path d="M1.500 0v14M7.500 0v14" stroke="#fff" strokeWidth="2.500" /></Svg></RecButton>
        </RecControls>
        <RecTime>Enregistremen<strong>00:00:17</strong></RecTime>
        <Svg w={30} h={24}><path d="M14 14v6M18 17v3M21.500 16v4M25 17v3M29 17v3" stroke="#1b7f93" strokeWidth="1.500" /></Svg>
        <Volume type="range" aria-label="Volume" defaultValue={100} />
        <Svg w={24} h={24}><circle cx="11" cy="10" r="9.500" stroke="#9a9a9a" /><circle cx="11" cy="10" r="5" stroke="#aaa" /><circle cx="11" cy="10" r="4" fill="#6e6e6e" /><circle cx="10" cy="9" r="1.500" fill="#d5d5d5" /><path d="M4 21c4 3 9 3 12 1M20 18v6M17 21h6" stroke="#9a9a9a" /></Svg>
        <Svg w={38} h={24}><path d="m14 22 2-7L28 3l5 5-12 12z" fill="#333" /><path d="m27 4 2.500-2.500 5 5L32 9z" fill="#fff" stroke="#333" /><path d="m16.500 15.500 4 4" stroke="#fff" /></Svg>
      </Recorder>
    </Workbook>

    <Taskbar>
      <Start aria-label="Démarrer"><Svg w={15} h={14}><path d="m0 2 6-1v5.500H0zM7 1l8-1v6.500H7zM0 7.500h6V13l-6-1zM7 7.500h8V14l-8-1z" fill="#fff" /></Svg></Start>
      <Cortana><Svg w={20} h={20}><circle cx="10" cy="10" r="8" stroke="#f2f2f2" strokeWidth="2.500" /></Svg><input aria-label="Cortana" placeholder="I'm Cortana. Ask me anything." /></Cortana>
      <Start aria-label="Affichage des tâches"><Svg w={18} h={13}><path d="M4.500 1.500h9v10h-9zM3 2.500H.5v8H3M15 2.500h2.500v8H15" stroke="#eee" /></Svg></Start>
      <Apps>
        <TaskApp aria-label="Edge"><Svg w={19} h={20}><path d="M0 9C1 3 5 0 10 0c6 0 9 4 9 9v3H7c0 3 3 4 6 4 2 0 4-1 5-1.500V18c-2 1.500-5 2-7 2-5 0-8-3-8-7 0-3 2-5 4-6-3 0-5 1-7 2zm7-.5h6c0-4-6-4-6 0z" fill="#1e7fd6" /></Svg></TaskApp>
        <TaskApp aria-label="Microsoft Edge"><Svg w={22} h={22}><circle cx="11" cy="11" r="11" fill="#1977c8" /><path d="M1 8C4-2 20-3 22 9c0 4-3 6-7 5-2-.5 0-2-1-4C12 5 4 4 1 8z" fill="#48cf8a" /><path d="M0 11c1-6 9-7 13-3-3-1-6 1-5 5 1 5 7 6 11 4-4 7-18 7-19-6z" fill="#155ca8" /><path d="M1 8c3-5 9-4 12 0C9 6 4 7 0 12z" fill="#36b8dd" /></Svg></TaskApp>
        <TaskApp aria-label="Chrome"><Svg w={20} h={20}><circle cx="10" cy="10" r="10" fill="#e8c12d" /><path d="M10 10 1.300 5A10 10 0 0 1 18.700 5z" fill="#df4a38" /><path d="M10 10 1.300 5A10 10 0 0 0 10 20l4-7z" fill="#3ba455" /><circle cx="10" cy="10" r="5" fill="#fff" /><circle cx="10" cy="10" r="4" fill="#3f7fe8" /></Svg></TaskApp>
        <TaskApp aria-label="Firefox"><Svg w={21} h={21}><path d="M2 5c1 0 2 1 3 2 2-1 4-2 5-2 0-2 2-4 3-5 0 3 4 3 5 6 1-1 0-2 0-3 5 6 3 18-7.500 18C0 21-2 12 2 5z" fill="#f5702f" /><path d="M13 0c0 3 4 3 5 6 3 5 0 9-4 11 3-5 1-9-4-12 0-2 2-4 3-5z" fill="#fbcb3c" /><circle cx="11" cy="12" r="5" fill="#8a3fc4" /><path d="M5 9c3-1 5 1 8 1-1 3-4 2-5 4-3 0-5-2-3-5z" fill="#f2466a" /></Svg></TaskApp>
        <TaskApp aria-label="Explorateur"><Svg w={20} h={17}><path d="M0 1h8l2 2h10v13H0z" fill="#f8d775" /><path d="M0 4h20v12H0z" fill="#fbe59b" /><path d="M4 16v-6h12v6h-3v-3H7v3z" fill="#3fa9d8" /></Svg></TaskApp>
        <TaskApp><AdobeMark $c="#e27a2b" $bg="#2b0f02">Ai</AdobeMark></TaskApp>
        <TaskApp><AdobeMark $c="#2fa6c4" $bg="#04202d">Ps</AdobeMark></TaskApp>
        <TaskApp><AdobeMark $c="#b25fd0" $bg="#22052f">Pr</AdobeMark></TaskApp>
        <TaskApp><AdobeMark $c="#c23a62" $bg="#2e0314">Id</AdobeMark></TaskApp>
        <TaskApp aria-label="Notepad++"><Svg w={20} h={21}><path d="M1 2h16v18H1z" fill="#eef5e6" stroke="#9bbf6b" /><path d="M1 11c5-2 10 2 16-1v10H1z" fill="#7cc92e" /><path d="M4 7h3M5.500 5.500v3M9 7h4" stroke="#333" /><path d="m19 1-9 13" stroke="#c8a63a" strokeWidth="2" /></Svg></TaskApp>
        <TaskApp aria-label="Tâches"><Svg w={20} h={20}><path d="m9 2 9 8-8 9-9-8z" fill="#f2f2f2" /><path d="M1 11 10 19l5-6-9 1z" fill="#f0821e" /><path d="m5 9 4 5L19 2" stroke="#c8371e" strokeWidth="3" /></Svg></TaskApp>
        <TaskApp $open aria-label="XAMPP"><Svg w={20} h={20}><rect width="20" height="20" rx="3" fill="#ee7427" /><path d="M6 10a2.500 2.500 0 1 1 2-4l4 0a2.500 2.500 0 1 1 2 4 2.500 2.500 0 1 1-2 4H8a2.500 2.500 0 1 1-2-4zM7 10h6" stroke="#fff" strokeWidth="2" /></Svg></TaskApp>
        <TaskApp $open aria-label="Lecteur"><Svg w={19} h={18}><path d="M3 0h15v16H3z" fill="#7aa9cf" /><path d="M0 2h14v15H0z" fill="#a7cbe6" stroke="#5d8db4" /><circle cx="8" cy="9.500" r="5.500" fill="#ee7a24" /><path d="m6 6 6 3.500L6 13z" fill="#fff" /></Svg></TaskApp>
        <TaskApp $active aria-label="Excel"><Svg w={20} h={20}><path d="M1 1h16v18H1z" fill="#d9efd2" stroke="#3c9b43" /><path d="M11 7h8v12h-8z" fill="#f5faf3" stroke="#8abb86" /><path d="M11 11h8M11 15h8M15 7v12" stroke="#8abb86" /><path d="m4 3 9 11M13 3 4 14" stroke="#1f7f30" strokeWidth="3" /></Svg></TaskApp>
      </Apps>
      <Tray>
        <TrayButton aria-label="Icônes masquées"><Svg w={11} h={7}><path d="m.5 6 5-5 5 5" stroke="#eee" strokeWidth="1.300" /></Svg></TrayButton>
        <TrayButton aria-label="Batterie"><Svg w={15} h={11}><path d="M5 3.500h8.500v6H3M13.500 5.500H15" stroke="#eee" /><path d="M1 1v3a2 2 0 0 0 4 0V1M0 1.500h6M3 6v3" stroke="#eee" /></Svg></TrayButton>
        <TrayButton aria-label="Mode avion"><Svg w={15} h={14}><path d="M1 4.500h1.500l1.500 2h3L5 .5h2L10 5.500h3c2 0 2 3 0 3h-3l-3 5H5l2-6H4l-1.500 2H1L2 7z" stroke="#eee" /></Svg></TrayButton>
        <TrayButton aria-label="Son"><Svg w={15} h={13}><path d="M.5 4.500H3l3-3v10l-3-3H.5zM8 4c1 1.500 1 3.500 0 5M10 2.500c2 2.500 2 5.500 0 8M12 1c3 3.500 3 7.500 0 11" stroke="#eee" /></Svg></TrayButton>
        <TrayButton aria-label="Notifications"><Svg w={14} h={14}><path d="M0 0h14v10H8l-3 4v-4H0z" fill="#fff" /><path d="M3 3h8M3 5h8M3 7h5" stroke="#111" /></Svg></TrayButton>
        <Clock>2:14 PM<br />28-Nov-22</Clock>
      </Tray>
    </Taskbar>
  </Desktop>
);

export default App;
